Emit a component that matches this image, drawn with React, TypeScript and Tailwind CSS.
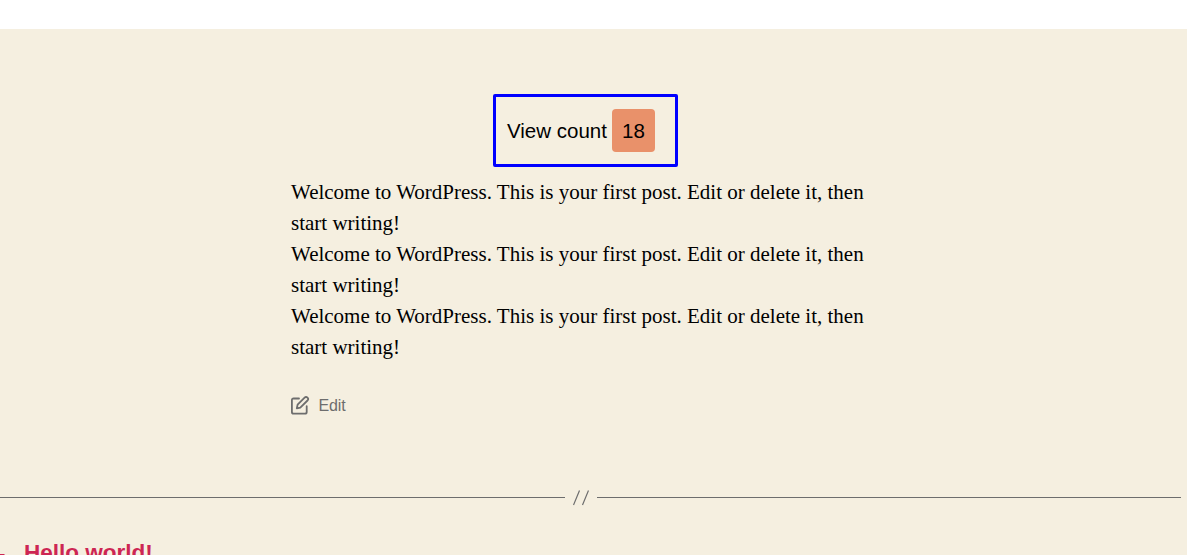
const message = "Welcome to WordPress. This is your first post. Edit or delete it, then start writing!";

export default function App() {
  return (
    <div className="h-[555px] overflow-hidden bg-white pt-[29px] font-['Liberation_Sans',sans-serif] text-black">
      <main className="h-[526px] bg-[#f5efe0] pt-[65px]">
        <div className="ml-[493px] flex h-[73px] w-[185px] items-center rounded-[2px] border-[3px] border-[#0000ff] pl-[11px] text-[20.5px] leading-[30px]">
          <span className="w-[105px] whitespace-nowrap">View count</span>
          <span className="flex h-[43px] w-[43px] items-center justify-center rounded-[4px] bg-[#e9916a]">18</span>
        </div>
        <div className="ml-[291px] mt-[10px] w-[580px] font-['Liberation_Serif',serif] text-[21px] leading-[31px]">
          {[0, 1, 2].map((i) => <p key={i}>{message}</p>)}
        </div>
        <div className="ml-[291px] mt-[32px] flex h-[20px] items-center gap-[8.5px] text-[16px] text-[#6d6d6d]">
          <svg width="19" height="19" viewBox="0 0 19 19" fill="none" stroke="currentColor" strokeWidth="1.8" strokeLinejoin="round" strokeLinecap="round">
            <path d="M8 2.5H2.6Q.9 2.5 .9 4.2V15.9Q.9 17.6 2.6 17.6H14Q15.7 17.6 15.7 15.9V10.2M13.6 1.7Q15 .3 16.5 1.7T16.5 4.5L9.3 11.7 5.8 12.4 6.6 8.7Z" />
          </svg>
          <span className="pt-[2px] tracking-[-0.15px]">Edit</span>
        </div>
        <div className="mt-[73px] flex h-[18px] w-[1181px] items-center">
          <span className="h-px w-[565px] bg-[#6d6d6d]" />
          <svg className="mx-[8px]" width="16" height="18" viewBox="0 0 16 18" stroke="#6d6d6d" strokeWidth="1.2"><path d="M.5 17 6.5 2.5M9.5 17 15.5 2.5" /></svg>
          <span className="h-px flex-1 bg-[#6d6d6d]" />
        </div>
        <div className="mt-[34px] flex text-[22.5px] font-bold leading-[26px] text-[#cd2653]">
          <svg className="mr-[18px]" width="6" height="26" viewBox="0 0 6 26" fill="currentColor"><path d="M0 14H4L5 15H0Z" /></svg>
          <span>Hello world!</span>
        </div>
      </main>
    </div>
  );
}
